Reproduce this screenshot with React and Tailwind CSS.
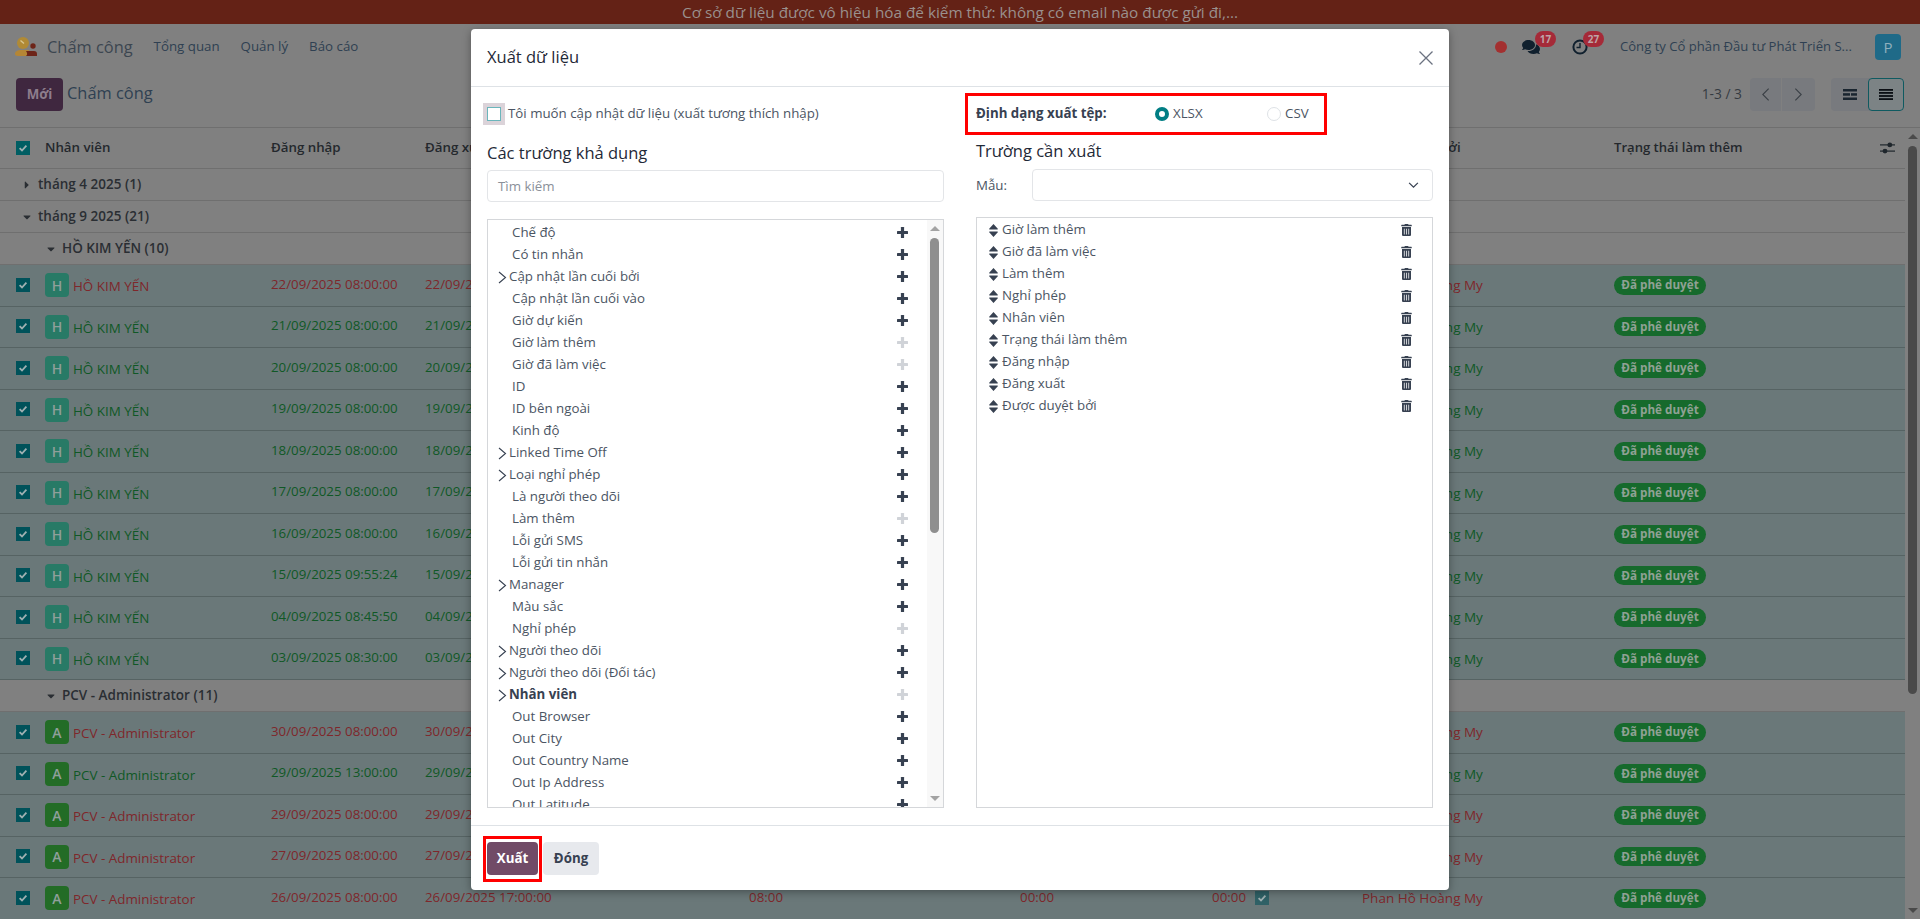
import React from "react";
import { FaTrashAlt, FaComments, FaCaretRight, FaCaretDown } from "react-icons/fa";

const availableFields = [
  ["Chế độ"], ["Có tin nhắn"], ["Cập nhật lần cuối bởi", "c"], ["Cập nhật lần cuối vào"], ["Giờ dự kiến"],
  ["Giờ làm thêm", "l"], ["Giờ đã làm việc", "l"], ["ID"], ["ID bên ngoài"], ["Kinh độ"],
  ["Linked Time Off", "c"], ["Loại nghỉ phép", "c"], ["Là người theo dõi"], ["Làm thêm", "l"], ["Lỗi gửi SMS"],
  ["Lỗi gửi tin nhắn"], ["Manager", "c"], ["Màu sắc"], ["Nghỉ phép", "l"], ["Người theo dõi", "c"],
  ["Người theo dõi (Đối tác)", "c"], ["Nhân viên", "cbl"], ["Out Browser"], ["Out City"], ["Out Country Name"],
  ["Out Ip Address"], ["Out Latitude"],
];
const exportFields = ["Giờ làm thêm", "Giờ đã làm việc", "Làm thêm", "Nghỉ phép", "Nhân viên", "Trạng thái làm thêm", "Đăng nhập", "Đăng xuất", "Được duyệt bởi"];

const yenRows = [
  ["22/09/2025 08:00:00", "22/09/2025 17:00:00", true], ["21/09/2025 08:00:00", "21/09/2025 17:00:00"],
  ["20/09/2025 08:00:00", "20/09/2025 17:00:00"], ["19/09/2025 08:00:00", "19/09/2025 17:00:00"],
  ["18/09/2025 08:00:00", "18/09/2025 17:00:00"], ["17/09/2025 08:00:00", "17/09/2025 17:00:00"],
  ["16/09/2025 08:00:00", "16/09/2025 17:00:00"], ["15/09/2025 09:55:24", "15/09/2025 17:00:00"],
  ["04/09/2025 08:45:50", "04/09/2025 17:00:00"], ["03/09/2025 08:30:00", "03/09/2025 17:00:00"],
];
const adminRows = [
  ["30/09/2025 08:00:00", "30/09/2025 17:00:00", true], ["29/09/2025 13:00:00", "29/09/2025 17:00:00"],
  ["29/09/2025 08:00:00", "29/09/2025 12:00:00", true], ["27/09/2025 08:00:00", "27/09/2025 17:00:00", true],
  ["26/09/2025 08:00:00", "26/09/2025 17:00:00", true],
];

function Check({ tone = "bg-[#00525a]" }) {
  return (
    <span className={`flex h-[14px] w-[14px] items-center justify-center ${tone}`}>
      <svg viewBox="0 0 14 14" className="h-[14px] w-[14px]" fill="none" stroke="#9fb0b2" strokeWidth="1.8">
        <path d="M3.6 7.2l2.4 2.3 4.4-4.8" />
      </svg>
    </span>
  );
}

function PlusIcon({ tone }) {
  return (
    <svg viewBox="0 0 11 11" className={`absolute left-[409px] top-[5px] h-[11px] w-[11px] ${tone}`} fill="currentColor">
      <rect x="3.900" width="3.200" height="11" rx="0.500" />
      <rect y="3.900" width="11" height="3.200" rx="0.500" />
    </svg>
  );
}

function SortIcon() {
  return (
    <svg viewBox="0 0 9 13" className="h-[13px] w-[9px] text-[#374151]" fill="currentColor">
      <path d="M4.500 0L8.800 4.700c.3.4 0 .8-.4.800H.6c-.4 0-.7-.4-.4-.8zM4.500 13L.2 8.300c-.3-.4 0-.8.4-.8h7.800c.4 0 .7.4.4.800z" />
    </svg>
  );
}

function Row({ name, letter, avatar, checkIn, checkOut, red }) {
  const color = red ? "text-[#7f272b]" : "text-[#105826]";
  return (
    <div className={`flex h-[41.5px] items-center border-b border-[#566363] bg-[#6a7879] text-[13.3px] ${color}`}>
      <div className="-mt-px flex w-[45px] shrink-0 pl-4"><Check /></div>
      <div className="flex w-[226px] shrink-0 items-center">
        <span className={`flex h-6 w-6 items-center justify-center rounded text-[14px] font-semibold text-[#8f9f9a] ${avatar}`}>{letter}</span>
        <span className="ml-[4px] mt-[2px] text-[13.4px]">{name}</span>
      </div>
      <div className="-mt-px w-[154px] shrink-0">{checkIn}</div>
      <div className="-mt-px w-[206px] shrink-0">{checkOut}</div>
      <div className="w-[152px] shrink-0 text-right">08:00</div>
      <div className="w-[271px] shrink-0 text-right">00:00</div>
      <div className="w-[192px] shrink-0 text-right">00:00</div>
      <div className="flex w-[116px] shrink-0 pl-[9px]"><Check tone="bg-[#2f6166]" /></div>
      <div className="w-[252px] shrink-0 text-[13.5px]">Phan Hồ Hoàng My</div>
      <div className="flex-1">
        <span className="inline-flex h-[19px] w-[92px] items-center justify-center rounded-full bg-[#166a2c] text-[11.7px] font-bold text-[#8fa194]">Đã phê duyệt</span>
      </div>
    </div>
  );
}

function Group({ indent, open, children }) {
  const Icon = open ? FaCaretDown : FaCaretRight;
  return (
    <div className={`flex h-8 items-center border-b border-[#6f6f6f] bg-[#808080] text-[13.5px] font-semibold text-[#2a2e33] ${indent}`}>
      <Icon className="h-3 w-3" />
      <span className="ml-[5px]">{children}</span>
    </div>
  );
}

function Background() {
  return (
    <div className="flex h-[919px] flex-col overflow-hidden bg-[#808080]">
      <div className="flex h-6 shrink-0 items-center justify-center bg-[#642216] text-[15.3px] text-[#9a908d]">
        Cơ sở dữ liệu được vô hiệu hóa để kiểm thử: không có email nào được gửi đi,...
      </div>

      <div className="flex h-[46px] shrink-0 items-center pl-[15px] pr-[19px] text-[#2f4052]">
        <svg viewBox="0 0 22 22" className="h-[22px] w-[22px]">
          <circle cx="8" cy="7" r="6" fill="#b08a35" />
          <path d="M5.5 4.5L9 7.5" stroke="#d8c68f" strokeWidth="1.4" />
          <circle cx="18" cy="10" r="2.7" fill="#6d2418" />
          <path d="M0 18c0-3 3-4 6-4h7c3 0 1 6 0 6H3c-2 0-3-1-3-2z" fill="#b58635" />
          <path d="M11 15h8c2 0 3 1 3 3v2H11c1.500-1 1.500-3 0-5z" fill="#6d2418" />
        </svg>
        <span className="ml-[10px] text-[16.4px] text-[#3c4650]">Chấm công</span>
        <span className="ml-[21px] text-[13.3px]">Tổng quan</span>
        <span className="ml-[21px] text-[13.3px]">Quản lý</span>
        <span className="ml-[21px] text-[13.3px]">Báo cáo</span>
        <div className="ml-auto flex items-center">
          <span className="h-3 w-3 rounded-full bg-[#a33030]" />
          <span className="relative ml-[15px] flex h-[20px] w-[50px] items-center">
            <FaComments className="h-[18px] w-[18px] text-[#10202e]" />
            <span className="absolute left-[13px] top-[-6px] flex h-4 w-[21px] items-center justify-center rounded-full bg-[#a52a38] text-[10px] font-bold text-[#bfa3a6]">17</span>
          </span>
          <span className="relative flex h-[20px] w-[48px] items-center">
            <svg viewBox="0 0 16 16" className="h-4 w-4" fill="none" stroke="#10202e" strokeWidth="2"><circle cx="8" cy="8" r="6.6" /><path d="M8 4v4.500H4.500" strokeWidth="1.4" /></svg>
            <span className="absolute left-[11px] top-[-6px] flex h-4 w-[21px] items-center justify-center rounded-full bg-[#a52a38] text-[10px] font-bold text-[#bfa3a6]">27</span>
          </span>
          <span className="w-[255px] truncate text-[13.1px]">Công ty Cổ phần Đầu tư Phát Triển S...</span>
          <span className="flex h-[26px] w-[26px] items-center justify-center rounded bg-[#1f6a88] text-[15px] text-[#8fb0bd]">P</span>
        </div>
      </div>

      <div className="flex h-[57px] shrink-0 items-start pl-4 pr-4 pt-2">
        <button className="h-[33px] w-[47px] rounded bg-[#3f273f] text-[13.3px] font-bold text-[#8d7d8c]">Mới</button>
        <span className="ml-[4px] mt-[3px] text-[16.4px] text-[#2f4052]">Chấm công</span>
        <div className="ml-auto flex items-center text-[#353b42]">
          <span className="mr-[8px] text-[13.8px]">1-3 / 3</span>
          <div className="flex h-[33px] w-[65px] overflow-hidden rounded bg-[#787a7e]">
            <span className="flex w-[32px] items-center justify-center border-r border-[#808080]">
              <svg viewBox="0 0 10 16" className="h-[15px] w-[9px]" fill="none" stroke="#3a3f45" strokeWidth="1.2"><path d="M8.500 1.500L2 8l6.500 6.500" /></svg>
            </span>
            <span className="flex flex-1 items-center justify-center">
              <svg viewBox="0 0 10 16" className="h-[15px] w-[9px]" fill="none" stroke="#3a3f45" strokeWidth="1.2"><path d="M1.500 1.500L8 8l-6.500 6.500" /></svg>
            </span>
          </div>
          <div className="ml-4 flex h-[33px] w-[73px] overflow-hidden rounded bg-[#787a7e]">
            <span className="flex w-[37px] items-center justify-center">
              <svg viewBox="0 0 14 11" className="h-[11px] w-[14px]" fill="#1a2530"><rect width="14" height="2.500" /><rect y="4.200" width="7" height="2.500" /><rect x="8" y="4.200" width="6" height="2.500" /><rect y="8.500" width="14" height="2.500" /></svg>
            </span>
            <span className="flex flex-1 items-center justify-center rounded border border-[#0f5a60] bg-[#7c8385]">
              <svg viewBox="0 0 14 11" className="h-[11px] w-[14px]" fill="#0b0f14"><rect width="14" height="1.800" /><rect y="3" width="14" height="1.800" /><rect y="6.100" width="14" height="1.800" /><rect y="9.200" width="14" height="1.800" /></svg>
            </span>
          </div>
        </div>
      </div>

      <div className="flex min-h-0 flex-1 border-t border-[#6f6f6f]">
        <div className="w-[1905px] shrink-0 overflow-hidden">
          <div className="flex h-[41px] items-center border-b border-[#6f6f6f] text-[13.3px] font-semibold text-[#24282d]">
            <div className="flex w-[45px] shrink-0 pl-4"><Check tone="bg-[#005e63]" /></div>
            <div className="w-[226px] shrink-0">Nhân viên</div>
            <div className="w-[154px] shrink-0">Đăng nhập</div>
            <div className="w-[937px] shrink-0">Đăng xuất</div>
            <div className="w-[252px] shrink-0">Được duyệt bởi</div>
            <div className="flex flex-1 items-center justify-between pr-[10px]">
              <span className="text-[13.1px]">Trạng thái làm thêm</span>
              <svg viewBox="0 0 15 12" className="h-3 w-[15px]" fill="#1f262c"><rect y="2.300" width="15" height="1.200" /><rect y="8.500" width="15" height="1.200" /><circle cx="9.800" cy="2.900" r="2.400" /><circle cx="5" cy="9.100" r="2.400" /></svg>
            </div>
          </div>
          <Group indent="pl-[21px]">tháng 4 2025 (1)</Group>
          <Group indent="pl-[21px]" open>tháng 9 2025 (21)</Group>
          <Group indent="pl-[45px]" open>HỒ KIM YẾN (10)</Group>
          {yenRows.map((r) => (
            <Row key={r[0]} name="HỒ KIM YẾN" letter="H" avatar="bg-[#287a66]" checkIn={r[0]} checkOut={r[1]} red={r[2]} />
          ))}
          <Group indent="pl-[45px]" open>PCV - Administrator (11)</Group>
          {adminRows.map((r) => (
            <Row key={r[0]} name="PCV - Administrator" letter="A" avatar="bg-[#236c26]" checkIn={r[0]} checkOut={r[1]} red={r[2]} />
          ))}
        </div>
        <div className="relative flex-1">
          <span className="absolute left-[3px] top-[6px] h-0 w-0 border-x-[5px] border-b-[5px] border-x-transparent border-b-[#4a4a4a]" />
          <span className="absolute left-[3px] top-[18px] h-[548px] w-[9px] rounded-full bg-[#4a4a4a]" />
          <span className="absolute bottom-[6px] left-[3px] h-0 w-0 border-x-[5px] border-t-[5px] border-x-transparent border-t-[#4a4a4a]" />
        </div>
      </div>
    </div>
  );
}

function FieldList() {
  return (
    <div className="relative mt-[17px] h-[589px] overflow-hidden border border-[#d5d7da] pt-[2px] text-[13.3px] text-[#4b5563]">
      {availableFields.map(([label, flags = ""]) => {
        const caret = flags.includes("c");
        const light = flags.includes("l");
        const bold = flags === "cbl";
        return (
          <div key={label} className={`relative flex h-[22px] items-center ${caret ? "pl-[10px]" : "pl-[24px]"}`}>
            {caret && (
              <svg viewBox="0 0 9 13" className="mr-[2px] h-[13px] w-[9px]" fill="none" stroke="#374151" strokeWidth="1.1"><path d="M1 1l6.500 5.500L1 12" /></svg>
            )}
            <span className={bold ? "font-bold text-[#374151]" : ""}>{label}</span>
            <PlusIcon tone={light || bold ? "text-[#d0d3d8]" : "text-[#374151]"} />
          </div>
        );
      })}
      <div className="absolute bottom-0 right-0 top-0 w-[16px] bg-[#f8f8f8]">
        <span className="absolute left-[3px] top-[6px] h-0 w-0 border-x-[5px] border-b-[5px] border-x-transparent border-b-[#a3a3a3]" />
        <span className="absolute left-[3px] top-[18px] h-[295px] w-[9px] rounded-full bg-[#8f8f8f]" />
        <span className="absolute bottom-[6px] left-[3px] h-0 w-0 border-x-[5px] border-t-[5px] border-x-transparent border-t-[#a3a3a3]" />
      </div>
    </div>
  );
}

function Modal() {
  return (
    <div className="absolute left-[471px] top-[29px] h-[861px] w-[978px] rounded bg-white shadow-[0_2px_8px_rgba(0,0,0,0.35)]">
      <div className="flex h-[58px] items-center justify-between border-b border-[#dee2e6] pl-4 pr-4">
        <span className="text-[16.5px] font-medium text-[#1f2937]">Xuất dữ liệu</span>
        <svg viewBox="0 0 14 14" className="h-[14px] w-[14px]" fill="none" stroke="#6b7280" strokeWidth="1.3"><path d="M0.500 0.500l13 13M13.500 0.500l-13 13" /></svg>
      </div>

      <div className="grid h-[738px] grid-cols-2 gap-8 px-4">
        <div>
          <div className="mt-[17px] flex h-5 items-center text-[13.3px] text-[#4b5563]">
            <span className="flex h-[14px] w-[14px] items-center justify-center border border-[#6bb5bb] bg-white outline-4 outline-[#dbd3d9]" />
            <span className="ml-[7px]">Tôi muốn cập nhật dữ liệu (xuất tương thích nhập)</span>
          </div>
          <div className="mt-[17px] flex h-6 items-center text-[16.5px] font-medium text-[#1f2937]">Các trường khả dụng</div>
          <div className="mt-[5px] flex h-8 items-center rounded border border-[#e3e5e8] pl-[10px] pt-[2px] text-[13.3px] text-[#8a9099]">Tìm kiếm</div>
          <FieldList />
        </div>

        <div>
          <div className="mt-[17px] flex h-5 items-center text-[13.3px] text-[#4b5563]">
            <span className="w-[179px] font-bold text-[#374151]">Định dạng xuất tệp:</span>
            <span className="h-[14px] w-[14px] rounded-full border-[4px] border-[#017e84] bg-white" />
            <span className="ml-[4px] w-[94px]">XLSX</span>
            <span className="h-[14px] w-[14px] rounded-full border border-[#dee2e6] bg-white" />
            <span className="ml-[4px]">CSV</span>
          </div>
          <div className="mt-[15px] flex h-6 items-center text-[16.5px] font-medium text-[#1f2937]">Trường cần xuất</div>
          <div className="mt-[6px] flex items-center">
            <span className="w-[56px] pt-[2px] text-[13.3px] font-medium text-[#4b5563]">Mẫu:</span>
            <div className="flex h-8 flex-1 items-center justify-end rounded border border-[#e3e5e8] pr-[13px]">
              <svg viewBox="0 0 12 8" className="h-[7px] w-[11px]" fill="none" stroke="#374151" strokeWidth="1.400"><path d="M1 1l5 5 5-5" /></svg>
            </div>
          </div>
          <div className="mt-4 h-[591px] border border-[#d5d7da] pt-px text-[13.3px] text-[#4b5563]">
            {exportFields.map((f) => (
              <div key={f} className="flex h-[22px] items-center pl-3 pr-[20px]">
                <SortIcon />
                <span className="ml-[4px] flex-1">{f}</span>
                <FaTrashAlt className="h-[12px] w-[11px] text-[#374151]" />
              </div>
            ))}
          </div>
        </div>
      </div>

      <div className="flex h-[65px] gap-[5px] border-t border-[#dee2e6] pl-4 pt-4">
        <button className="h-[33px] w-[51px] rounded bg-[#714b67] text-[13.3px] font-bold text-white">Xuất</button>
        <button className="h-[33px] w-[56px] rounded bg-[#e7e9ed] text-[13.3px] font-bold text-[#374151]">Đóng</button>
      </div>

      <div className="absolute left-[494px] top-[64px] h-[42px] w-[362px] border-[3px] border-[#ff0000]" />
      <div className="absolute left-[12px] top-[807px] h-[46px] w-[59px] border-[3px] border-[#ff0000]" />
    </div>
  );
}

export default function App() {
  return (
    <div className="relative h-[919px] w-[1920px] overflow-hidden [font-family:'Open_Sans','Noto_Sans',sans-serif]">
      <Background />
      <Modal />
    </div>
  );
}
